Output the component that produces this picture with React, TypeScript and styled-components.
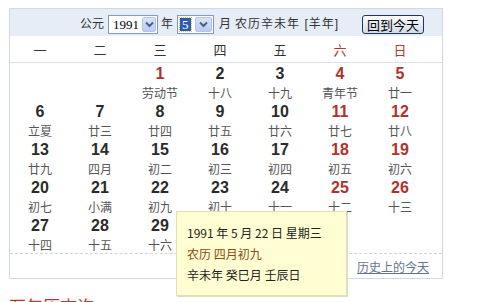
import React from "react";
import styled, { createGlobalStyle } from "styled-components";

const GlobalStyle = createGlobalStyle`
    body {
        margin: 0;
        background: #fff;
        font-family: "Liberation Sans", "Noto Sans CJK SC", sans-serif;
        color: #333;
    }
`

const StyledPage = styled.div `
    padding: 8px 0 0 9px;
    width: 480px;
    height: 302px;
    box-sizing: border-box;
    overflow: hidden;
`

const StyledCalendar = styled.div `
    position: relative;
    width: 432px;
    border: 1px solid #cfd8e4;
`

const StyledHeader = styled.div `
    display: flex;
    align-items: center;
    gap: 4px;
    height: 27px;
    padding: 0 18px 0 70px;
    background: #e6edf7;
    font-size: 12px;
    color: #333;
`

const StyledLabel = styled.span<{ $space?: number; $spread?: boolean }> `
    margin-left: ${p => p.$space ?? 0}px;
    letter-spacing: ${p => p.$spread ? "1px" : "0"};
    white-space: nowrap;
`

const StyledSelect = styled.div<{ $width: number }> `
    display: flex;
    width: ${p => p.$width}px;
    height: 19px;
    box-sizing: border-box;
    border: 1px solid #7f9db9;
    background: #fff;
    margin-top: 3px;
`

const StyledSelectValue = styled.div<{ $active?: boolean }> `
    flex: 1;
    display: flex;
    align-items: center;
    padding-left: 2px;
    font-family: "Liberation Serif", serif;
    font-size: 13px;
    color: #000;

    span {
        padding: 0 2px;
        line-height: 13px;
        background: ${p => p.$active ? "#2c5bb5" : "transparent"};
        color: ${p => p.$active ? "#fff" : "#000"};
        outline: ${p => p.$active ? "1px dotted #e0c040" : "none"};
    }
`

const StyledArrow = styled.div `
    width: 15px;
    display: flex;
    align-items: center;
    justify-content: center;
    margin: 1px;
    border: 1px solid #b3c6ea;
    border-radius: 2px;
    background: linear-gradient(#d9e4fa, #b9cdf3);
`

const StyledTodayButton = styled.button `
    margin-left: auto;
    margin-top: 3px;
    width: 62px;
    height: 19px;
    padding: 0;
    border: 1px solid #20375a;
    border-radius: 3px;
    background: linear-gradient(#fbfcfe, #d3dbe8);
    font-family: "Noto Sans CJK SC", sans-serif;
    font-size: 13px;
    line-height: 17px;
    color: #000;
`

const StyledWeekRow = styled.div `
    display: grid;
    grid-template-columns: repeat(7, 60px);
    height: 26px;
    align-items: center;
    border-bottom: 1px solid #d8e0ea;
    font-family: "Noto Sans CJK SC", sans-serif;
    font-size: 13px;
`

const StyledWeekDay = styled.div<{ $weekend?: boolean }> `
    text-align: center;
    color: ${p => p.$weekend ? "#a83a32" : "#333"};
`

const StyledDays = styled.div `
    display: grid;
    grid-template-columns: repeat(7, 60px);
    grid-auto-rows: 38px;
    border-bottom: 1px dashed #cfd3da;
`

const StyledDay = styled.div `
    display: flex;
    flex-direction: column;
    align-items: center;
    padding-top: 1px;
`

const StyledDayNumber = styled.div<{ $red?: boolean }> `
    font-size: 16px;
    font-weight: bold;
    line-height: 20px;
    color: ${p => p.$red ? "#b4302c" : "#2b2b2b"};
`

const StyledLunar = styled.div `
    font-family: "Noto Sans CJK SC", sans-serif;
    font-size: 12px;
    line-height: 17px;
    color: #555;
`

const StyledFooter = styled.div `
    display: flex;
    justify-content: flex-end;
    align-items: center;
    height: 24px;
    padding-right: 13px;
`

const StyledHistoryLink = styled.a `
    font-family: "Noto Sans CJK SC", sans-serif;
    font-size: 12px;
    color: #66738f;
    text-decoration: underline;
`

const StyledTooltip = styled.div `
    position: absolute;
    left: 166px;
    top: 202px;
    width: 171px;
    height: 85px;
    box-sizing: border-box;
    padding: 10px 0 0 10px;
    background: #fffed2;
    border: 1px solid #e3e0b4;
    box-shadow: 1px 1px 0 #dcdcc4;
    font-family: "Noto Sans CJK SC", sans-serif;
    font-size: 12px;
    line-height: 21px;
    color: #222;
`

const StyledTipLine = styled.div<{ $lunar?: boolean }> `
    color: ${p => p.$lunar ? "#8a4a12" : "#222"};
`

const StyledQueryTitle = styled.div `
    margin-top: 14px;
    font-family: "Noto Sans CJK SC", sans-serif;
    font-size: 17px;
    color: #c8322a;
`

const Chevron = () => (
    <svg width="9" height="7" viewBox="0 0 9 7">
        <path d="M1 1.5 L4.5 5 L8 1.5" fill="none" stroke="#4a5f8a" strokeWidth="2" />
    </svg>
)

type Day = { n: number; lunar: string; red?: boolean }

const weekDays = ["一", "二", "三", "四", "五", "六", "日"]

const days: (Day | null)[] = [
    null, null,
    { n: 1, lunar: "劳动节", red: true },
    { n: 2, lunar: "十八" },
    { n: 3, lunar: "十九" },
    { n: 4, lunar: "青年节", red: true },
    { n: 5, lunar: "廿一", red: true },
    { n: 6, lunar: "立夏" },
    { n: 7, lunar: "廿三" },
    { n: 8, lunar: "廿四" },
    { n: 9, lunar: "廿五" },
    { n: 10, lunar: "廿六" },
    { n: 11, lunar: "廿七", red: true },
    { n: 12, lunar: "廿八", red: true },
    { n: 13, lunar: "廿九" },
    { n: 14, lunar: "四月" },
    { n: 15, lunar: "初二" },
    { n: 16, lunar: "初三" },
    { n: 17, lunar: "初四" },
    { n: 18, lunar: "初五", red: true },
    { n: 19, lunar: "初六", red: true },
    { n: 20, lunar: "初七" },
    { n: 21, lunar: "小满" },
    { n: 22, lunar: "初九" },
    { n: 23, lunar: "初十" },
    { n: 24, lunar: "十一" },
    { n: 25, lunar: "十二", red: true },
    { n: 26, lunar: "十三", red: true },
    { n: 27, lunar: "十四" },
    { n: 28, lunar: "十五" },
    { n: 29, lunar: "十六" },
    { n: 30, lunar: "十七" },
    { n: 31, lunar: "十八" },
]

const App = (): JSX.Element => {
    return (
        <>
        <GlobalStyle />
        <StyledPage>
            <StyledCalendar>
                <StyledHeader>
                    <StyledLabel>公元</StyledLabel>
                    <StyledSelect $width={50}>
                        <StyledSelectValue><span>1991</span></StyledSelectValue>
                        <StyledArrow><Chevron /></StyledArrow>
                    </StyledSelect>
                    <StyledLabel $space={-1}>年</StyledLabel>
                    <StyledSelect $width={37}>
                        <StyledSelectValue $active><span>5</span></StyledSelectValue>
                        <StyledArrow><Chevron /></StyledArrow>
                    </StyledSelect>
                    <StyledLabel $space={1}>月</StyledLabel>
                    <StyledLabel $spread>农历辛未年 [羊年]</StyledLabel>
                    <StyledTodayButton>回到今天</StyledTodayButton>
                </StyledHeader>
                <StyledWeekRow>
                    {weekDays.map((d, i) => (
                        <StyledWeekDay key={d} $weekend={i > 4}>{d}</StyledWeekDay>
                    ))}
                </StyledWeekRow>
                <StyledDays>
                    {days.map((d, i) => (
                        <StyledDay key={i}>
                            {d && (
                                <>
                                    <StyledDayNumber $red={d.red}>{d.n}</StyledDayNumber>
                                    <StyledLunar>{d.lunar}</StyledLunar>
                                </>
                            )}
                        </StyledDay>
                    ))}
                </StyledDays>
                <StyledFooter>
                    <StyledHistoryLink href="#">历史上的今天</StyledHistoryLink>
                </StyledFooter>
                <StyledTooltip>
                    <StyledTipLine>1991 年 5 月 22 日 星期三</StyledTipLine>
                    <StyledTipLine $lunar>农历 四月初九</StyledTipLine>
                    <StyledTipLine>辛未年 癸巳月 壬辰日</StyledTipLine>
                </StyledTooltip>
            </StyledCalendar>
            <StyledQueryTitle>万年历查询</StyledQueryTitle>
        </StyledPage>
        </>
    )
}

export default App;
